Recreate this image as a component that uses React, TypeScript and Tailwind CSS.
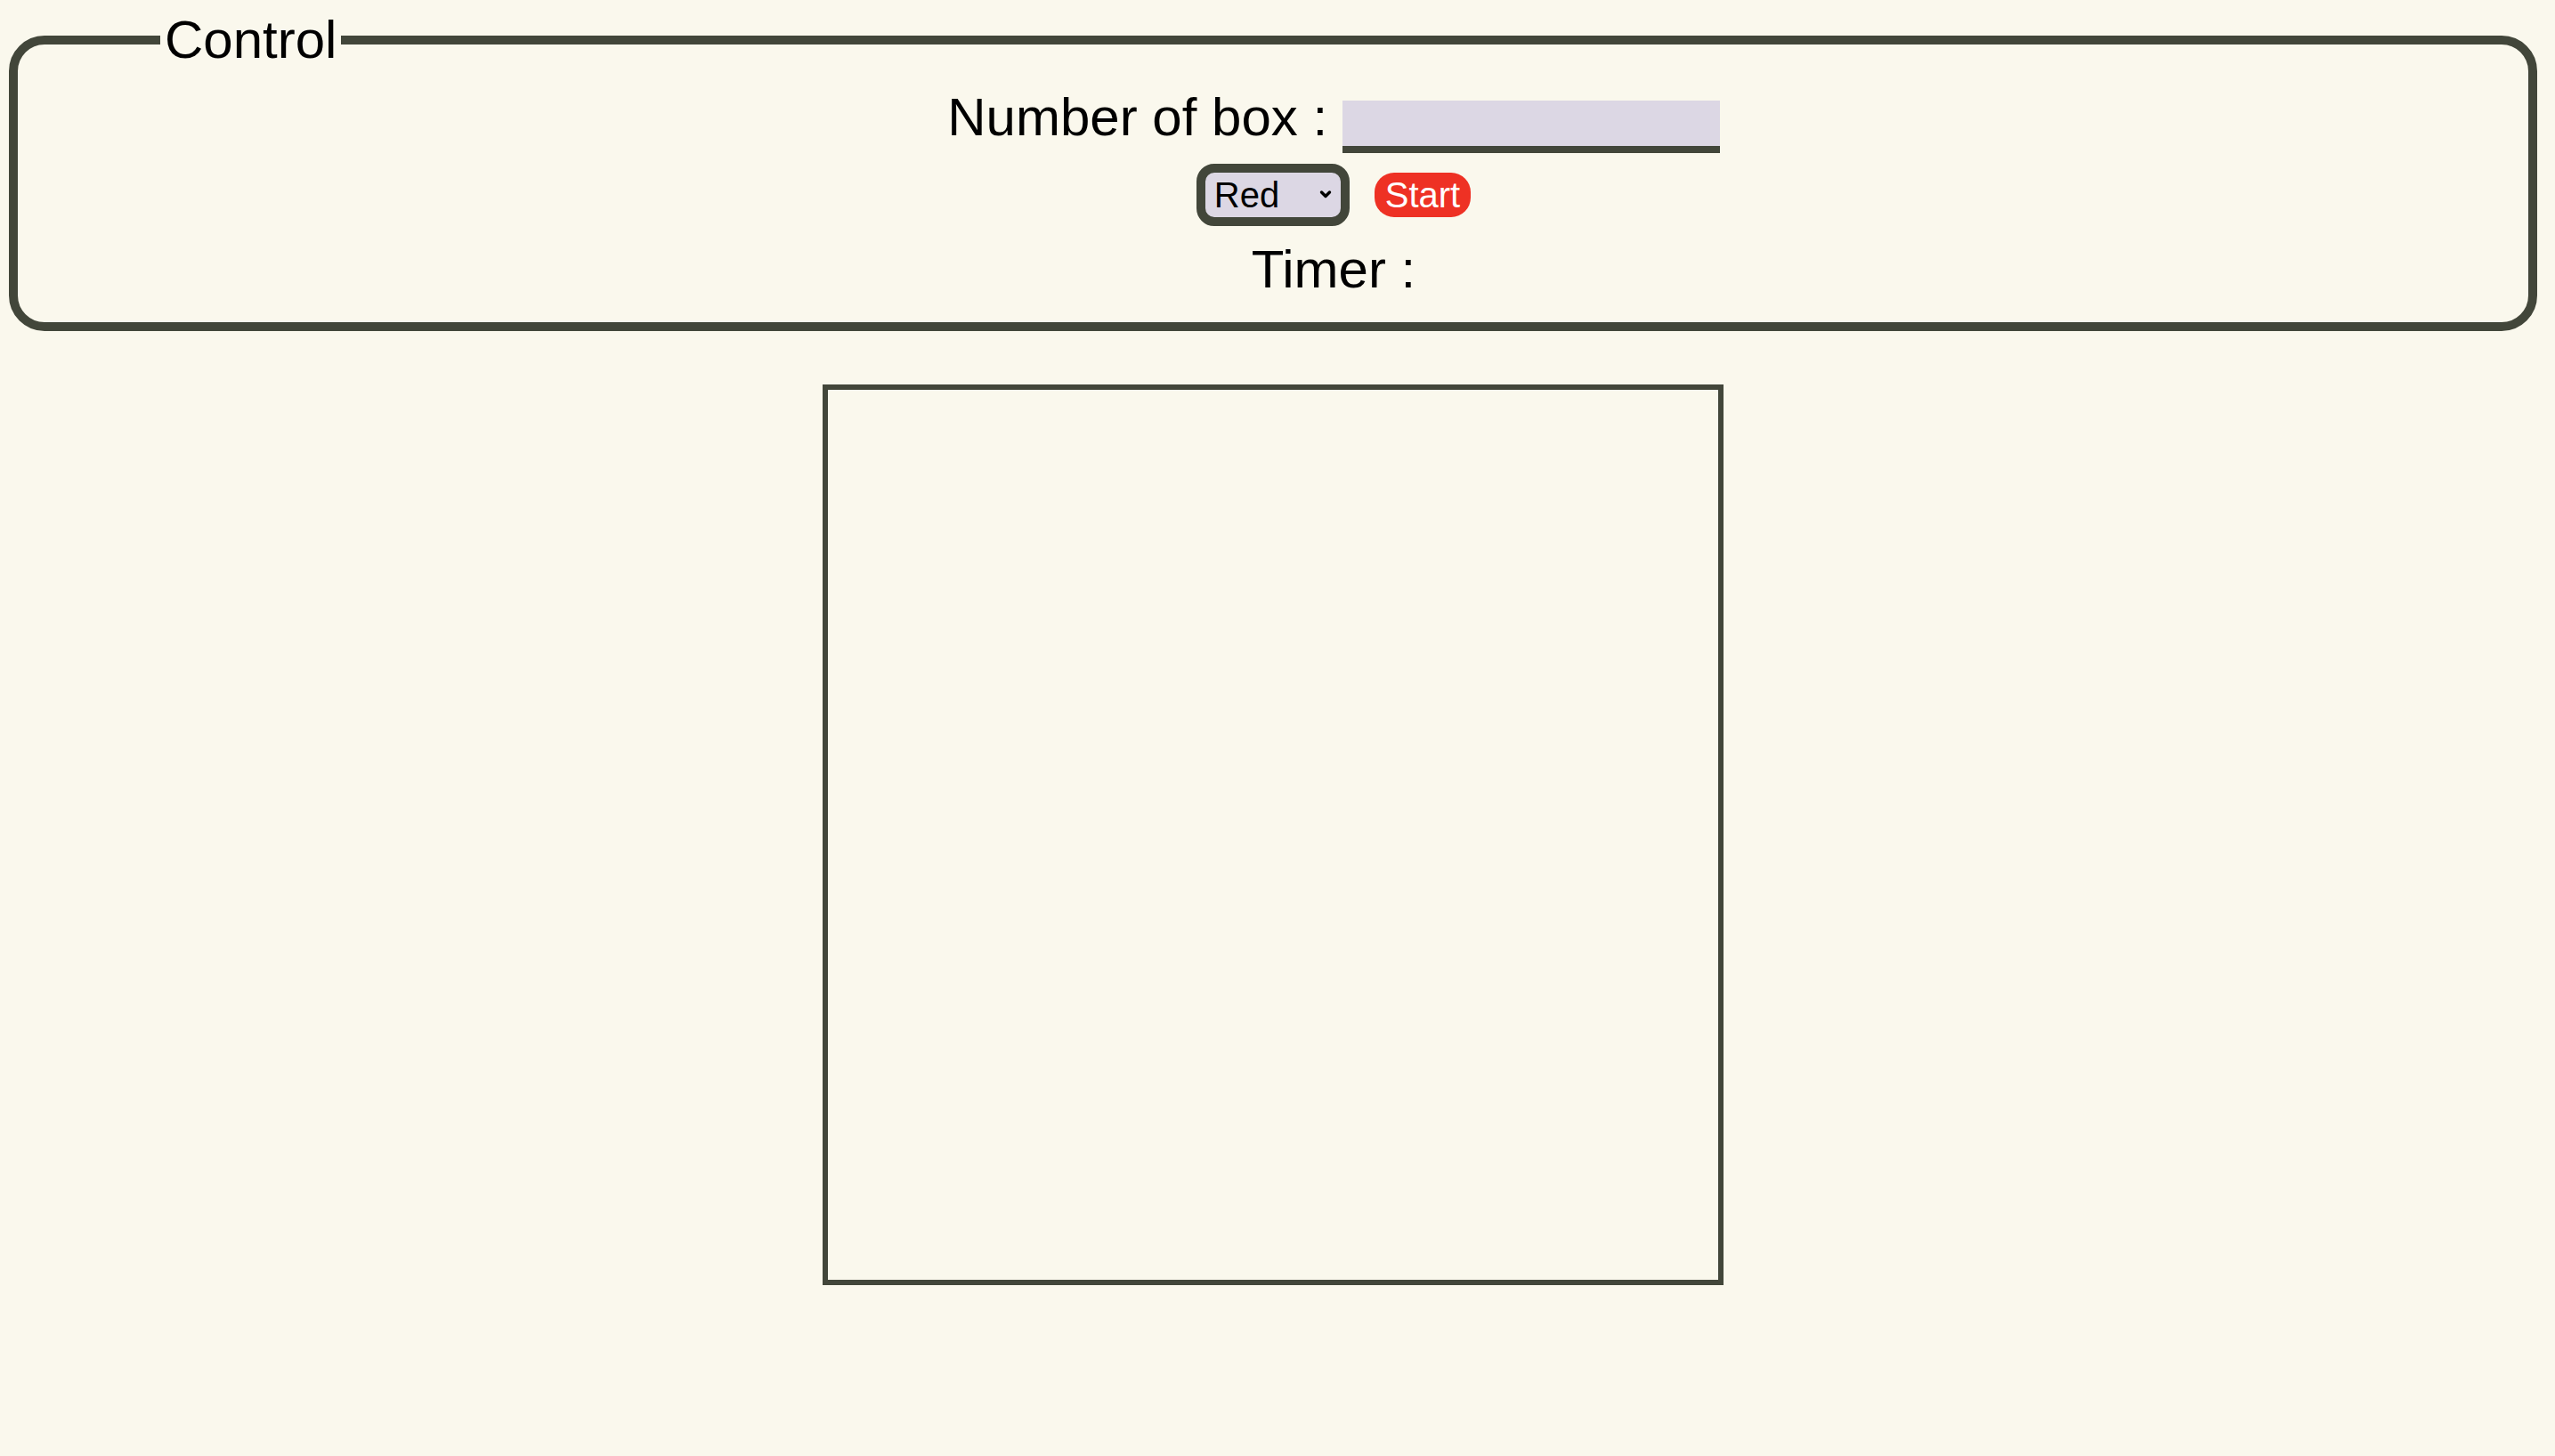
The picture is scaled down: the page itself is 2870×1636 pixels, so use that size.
import { useState } from "react";

function App() {
	const [count, setCount] = useState("");
	const [color, setColor] = useState("Red");

	return (
		<div className="min-h-screen w-full bg-[#faf8ed] pt-[10px] font-['Liberation_Sans',Arial,sans-serif] text-black">
			<div className="w-[2860px] pb-[100px]">
				<fieldset className="mx-[10px] rounded-[40px] border-[10px] border-[#42463a] pt-[18px] pb-[25px]">
					<legend className="ml-[160px] px-[5px] text-[60px] leading-[69px]">Control</legend>
					<div className="flex flex-col items-center pl-[136px]">
						<div className="flex items-start">
							<span className="text-[60px] leading-[69px] whitespace-pre">Number of box : </span>
							<input
								type="text"
								value={count}
								onChange={(e) => setCount(e.target.value)}
								className="mt-[16px] h-[59px] w-[424px] border-b-[8px] border-[#42463a] bg-[#dcd7e4] px-2 text-[40px] outline-none"
							/>
						</div>
						<div className="mt-[12px] flex items-center gap-[28px]">
							<div className="relative">
								<select
									value={color}
									onChange={(e) => setColor(e.target.value)}
									className="h-[70px] w-[172px] appearance-none rounded-[20px] border-[10px] border-[#42463a] bg-[#dcd7e4] pl-[10px] text-[40px] leading-[46px] outline-none">
									<option>Red</option>
									<option>Green</option>
									<option>Blue</option>
								</select>
								<svg
									xmlns="http://www.w3.org/2000/svg"
									viewBox="0 0 14 11"
									className="pointer-events-none absolute top-[29px] left-[138px] h-[11px] w-[14px]"
									fill="none"
									stroke="black"
									strokeWidth="3.4"
									strokeLinecap="round"
									strokeLinejoin="round">
									<path d="M2.5 3l4.5 4.5 4.5-4.5" />
								</svg>
							</div>
							<button className="h-[50px] rounded-[22px] bg-[#ee3124] px-[12px] text-[40px] leading-[46px] text-white">
								Start
							</button>
						</div>
						<div className="mt-[14px] text-[60px] leading-[69px]">Timer :</div>
					</div>
				</fieldset>
				<div className="mx-auto mt-[60px] h-[1012px] w-[1012px] border-[6px] border-[#42463a]"></div>
			</div>
		</div>
	);
}

export default App;
